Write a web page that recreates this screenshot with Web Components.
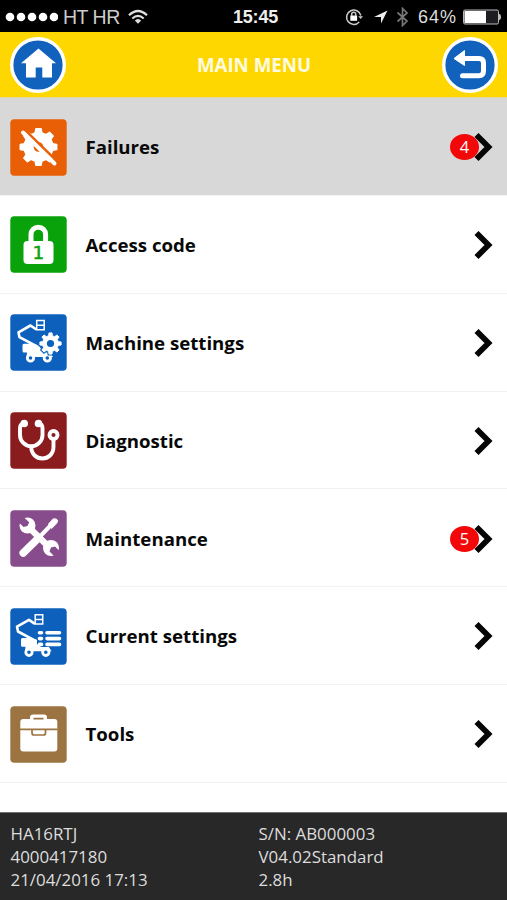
<!DOCTYPE html>
<html lang="en">
<head>
<meta charset="utf-8">
<title>Main menu</title>
<style>
html,body{margin:0;height:100%;overflow:hidden;background:#fff}
</style>
</head>
<body>
<machine-app></machine-app>
<script>
// Outline of a cog wheel with a round hole, as path data.
function gear(cx, cy, ro, ri, hole, teeth = 8) {
  const p = [], step = Math.PI * 2 / teeth;
  for (let i = 0; i < teeth; i++) {
    const a = i * step - Math.PI / 2;
    for (const [r, d] of [[ri, -.3], [ro, -.18], [ro, .18], [ri, .3]])
      p.push((cx + r * Math.cos(a + d * step)).toFixed(2) + ' ' + (cy + r * Math.sin(a + d * step)).toFixed(2));
  }
  return `M${p.join('L')}Z` + (hole ? `M${cx - hole} ${cy}a${hole} ${hole} 0 1 0 ${hole * 2} 0a${hole} ${hole} 0 1 0 ${-hole * 2} 0Z` : '');
}
const lift = `
  <path d="M26.400 15.500L20.500 11.500L8.500 18.300L9.500 23.200L27 32.500" fill="none" stroke="#fff" stroke-width="2.600" stroke-linejoin="round"/>
  <path d="M26.700 6.500h7.500v9.300h-7.500zM26.500 11.200h7.500" fill="none" stroke="#fff" stroke-width="1.500"/>
  <path d="M14 29.700h9l6 2l4 6.300h7l3 5H16.500l.5-4.500h-3q-1.500 0-1.500-1.500v-5.800q0-1.500 1.500-1.500z" fill="#fff"/>`;
const wheels = `<g fill="COLOR" stroke="#fff" stroke-width="2.800"><circle cx="20.500" cy="44" r="3.200"/><circle cx="37.300" cy="44" r="3.200"/></g>`;
const icons = {
  failures: ['#e95f05', `<path fill="#fff" fill-rule="evenodd" stroke="#fff" stroke-width="1.500" stroke-linejoin="round" d="${gear(28.5, 28, 18.4, 14.5, 5.6)}"/>
    <path d="M13 9.300L49.500 44.800" stroke="#e95f05" stroke-width="2.600"/>
    <path d="M13 13.500L44.500 44.500" stroke="#fff" stroke-width="4" stroke-linecap="round"/>`],
  access: ['#0aa20a', `<path d="M21 27V18.500a7.300 7.300 0 0 1 14.600 0V27" fill="none" stroke="#fff" stroke-width="5"/>
    <rect x="13.500" y="25" width="30" height="23" rx="4" fill="#fff"/>
    <text x="28.300" y="43.300" text-anchor="middle" font-family="DejaVu Sans, sans-serif" font-size="18.500" stroke="#0aa20a" stroke-width=".5" fill="#0aa20a">1</text>`],
  machine: ['#0d61bd', lift + wheels.replace('COLOR', '#0d61bd') +
    `<path fill="#fff" fill-rule="evenodd" stroke="#0d61bd" stroke-width="3" d="${gear(40.5, 29.5, 10.7, 8, 0)}"/>
    <path fill="#fff" stroke="#fff" stroke-linejoin="round" fill-rule="evenodd" d="${gear(40.5, 29.5, 10.7, 8, 0)}"/><circle cx="40.500" cy="29.500" r="3.600" fill="#0d61bd"/>`],
  diagnostic: ['#8a1c1e', `<g fill="none" stroke="#fff" stroke-width="3.900"><path d="M14 11.500Q10 12 10 16V23a11 11 0 0 0 22.500 0V16Q32.500 12 28.500 11.500"/><path d="M21.200 34.500c0 16 22.300 16 22.300 0V27"/><circle cx="43.500" cy="23" r="4"/></g>
    <circle cx="14.200" cy="11.500" r="3.800" fill="#fff"/><circle cx="28.500" cy="11.500" r="3.800" fill="#fff"/>`],
  maintenance: ['#874c8b', `<g fill="none" stroke="#fff" stroke-linecap="round"><path d="M19 17.500L40 38" stroke-width="6.500"/><path d="M13.200 43L29 27.500" stroke-width="7.500"/><path d="M29 27.500L41.500 14.500" stroke-width="4"/></g>
    <path d="M38 14L43 8.500Q46 7.500 48 10.200Q48.500 12 46.500 14L41.500 19Z" fill="#fff"/>
    <circle cx="17.500" cy="15.500" r="8" fill="#fff"/><path d="M8 8L13 6.500L19.200 12.200L17.500 16L13.500 17L8 11.500Z" fill="#874c8b"/>
    <circle cx="41" cy="38" r="8" fill="#fff"/><path d="M50 46L45.500 47.500L39.500 41.500L41 37.500L45 36.500L50.500 42Z" fill="#874c8b"/>`],
  current: ['#0d61bd', `<g transform="translate(-1.500 .3)">${lift}${wheels.replace('COLOR', '#0d61bd')}</g>
    <path d="M27 22H53V39H31L27 36Z" fill="#0d61bd"/>
    <g stroke="#fff" stroke-width="3.600" stroke-linecap="round"><path d="M29.500 24.800h2M37 24.800h12.500M29.500 30.600h2M37 30.600h12.500M29.500 36.400h2M37 36.400h12.500"/></g>`],
  tools: ['#9b7442', `<path d="M20 14V11.500Q20 8.500 23 8.500H34Q37 8.500 37 11.500V14" fill="#fff"/><rect x="10.300" y="13" width="37" height="32.500" rx="3" fill="#fff"/>
    <path d="M23.500 12.600H33.500M10 23.400H47.500M22 23.500V27Q22 29 24 29H33.500Q35.500 29 35.500 27V23.500" fill="none" stroke="#9b7442" stroke-width="1.700"/>`]
};
function define(name, render) {
  customElements.define(name, class extends HTMLElement {
    constructor() {
      super();
      this.attachShadow({ mode: 'open' });
    }
    connectedCallback() { this.shadowRoot.innerHTML = render(this); }
  });
}
define('status-bar', () => `<style>
  :host{display:grid;grid-template-columns:1fr auto 1fr;align-items:center;height:32px;background:#000;color:#eee;font:18px/32px "Liberation Sans",Arial,sans-serif;white-space:nowrap;padding:1px 6px 0 5px;box-sizing:border-box}
  div{display:flex;align-items:center}svg{display:block;flex:none}
  .car{font-size:19.500px;margin:0 8px 0 5px;letter-spacing:-.5px;color:#ccc}.time{font-size:18px;font-weight:700;letter-spacing:-.2px;padding-left:5px}
  .r{justify-content:flex-end}.pct{font-size:18px;margin:0 6px 0 9px;letter-spacing:1px;color:#ddd}
  </style>
  <div><svg width="53" height="12" fill="#fff"><circle cx="5" cy="6" r="4.300"/><circle cx="16" cy="6" r="4.300"/><circle cx="27" cy="6" r="4.300"/><circle cx="38" cy="6" r="4.300"/><circle cx="49" cy="6" r="4.300"/></svg><span class="car">HT HR</span>
  <svg width="20" height="16" fill="none" stroke="#ddd" stroke-width="2.200"><path d="M1 6.200Q10-2.200 19 6.200M4.300 9.500Q10 4.200 15.700 9.500"/><path d="M6.800 11.500Q10 8.500 13.200 11.500L10 14.700Z" fill="#ddd" stroke="none"/></svg></div>
  <span class="time">15:45</span>
  <div class="r"><svg width="18" height="18" fill="none" stroke="#ccc" stroke-width="1.500"><path d="M14.200 14A7.200 7.200 0 1 1 15.800 7.500"/><path d="M13.200 8.300H18L15.700 11Z" fill="#ccc" stroke="none"/><rect x="5.300" y="7.500" width="6.800" height="5.300" fill="#fff" stroke="none"/><path d="M6.700 8V6.300a2 2 0 0 1 4 0V8"/></svg>
  <svg width="14" height="14" style="margin:0 8px 0 11px"><path d="M13.500 .5L0 7H7V13.500Z" fill="#eee"/></svg>
  <svg width="13" height="20" fill="none" stroke="#777" stroke-width="1.700"><path d="M1.500 5.500L11 14L6.500 18.500V1.500L11 6L1.500 14.500"/></svg>
  <span class="pct">64%</span>
  <svg width="38" height="16"><rect x=".5" y="1" width="35" height="14" rx="1.500" fill="#1e1e22" stroke="#bbb"/><rect x="1.500" y="2" width="21.500" height="12" fill="#fff"/><path d="M36 5q2 0 2 3t-2 3z" fill="#bbb"/></svg></div>`);
define('round-button', el => `<style>:host{display:block;width:56px;height:56px}svg{display:block}</style>
  <svg width="56" height="56"><circle cx="28" cy="28" r="26.300" fill="#1062bd" stroke="#fff" stroke-width="3.400"/>${el.getAttribute('kind') === 'home'
    ? '<path d="M28.500 11.500L46 26.300H42V40.500H32.300V30.500H25.700V40.500H16V26.300H11Z" fill="#fff"/>'
    : '<path d="M20 21.500H37Q41.500 21.500 41.500 26V34Q41.500 38.700 37 38.700H20.500" fill="none" stroke="#fff" stroke-width="5" stroke-linecap="round"/><path d="M12 21.500L22.500 13.500V28.500Z" fill="#fff" stroke="#fff" stroke-linejoin="round"/>'}</svg>`);
define('app-header', () => `<style>
  :host{display:flex;justify-content:space-between;align-items:center;box-sizing:border-box;height:66px;padding:0 9px 0 10px;background:#ffd700;border-bottom:1px solid #e4d7a0}
  h1{margin:0;padding-top:1px;color:#fffbe0;font:700 18.700px/24px "Open Sans","Noto Sans",sans-serif}
  </style><round-button kind="home"></round-button><h1><slot></slot></h1><round-button kind="back"></round-button>`);
define('menu-icon', el => {
  const [color, art] = icons[el.getAttribute('name')];
  return `<style>:host{display:block;width:57px;height:57px}svg{display:block}</style><svg width="57" height="57"><rect x=".3" y=".3" width="56.400" height="56.400" rx="4" fill="${color}"/>${art}</svg>`;
});
define('menu-item', el => `<style>
  :host{display:flex;align-items:center;box-sizing:border-box;height:97.860px;padding:1.300px 13px 0 10px;border-bottom:1px solid #f2f2f2;background:#fff}
  :host([active]){background:#d8d8d8}
  .label{flex:1;margin-left:18.500px;font:700 18.650px/26px "Open Sans","Noto Sans",sans-serif;color:#080808}
  .badge{width:29px;height:26px;margin-right:-6px;border-radius:50%;background:#f20808;color:#fff;font:16.500px/26px "Open Sans","Noto Sans",sans-serif;text-align:center;position:relative}
  svg{display:block}
  </style><menu-icon name="${el.getAttribute('icon')}"></menu-icon><span class="label"><slot></slot></span>${el.hasAttribute('count') ? `<span class="badge">${el.getAttribute('count')}</span>` : ''}
  <svg width="21" height="30"><path d="M3.500 3L15.500 15L3.500 27" fill="none" stroke="#050505" stroke-width="5.700"/></svg>`);
define('machine-info', () => `<style>
  :host{display:grid;grid-template-columns:248px 1fr;box-sizing:border-box;height:88px;padding:9px 10.500px;background:#282828;border-top:1px solid #707070;color:#ddd;font:16.900px/23.200px "Open Sans","Noto Sans",sans-serif}
  div{display:flex;flex-direction:column}
  </style><div><span>HA16RTJ</span><span>4000417180</span><span>21/04/2016 17:13</span></div><div><span>S/N: AB000003</span><span>V04.02Standard</span><span>2.8h</span></div>`);
define('machine-app', () => `<style>
  :host{display:grid;grid-template-rows:auto auto 1fr auto;width:507px;height:900px;overflow:hidden;background:#fff}
  </style><status-bar></status-bar><app-header>MAIN MENU</app-header><main>
  <menu-item icon="failures" count="4" active>Failures</menu-item>
  <menu-item icon="access">Access code</menu-item>
  <menu-item icon="machine">Machine settings</menu-item>
  <menu-item icon="diagnostic">Diagnostic</menu-item>
  <menu-item icon="maintenance" count="5">Maintenance</menu-item>
  <menu-item icon="current">Current settings</menu-item>
  <menu-item icon="tools">Tools</menu-item></main><machine-info></machine-info>`);
</script>
</body>
</html>
